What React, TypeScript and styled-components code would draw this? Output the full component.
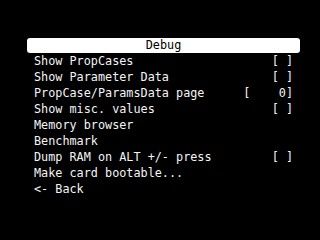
import React from "react";
import styled, { createGlobalStyle } from "styled-components";

const Global = createGlobalStyle`
  html, body {
    margin: 0;
    padding: 0;
    background: #000;
    width: 320px;
    height: 240px;
    overflow: hidden;
  }
`;

const Screen = styled.div`
  width: 320px;
  height: 240px;
  background: #000;
  padding: 37px 20px 0 27px;
  box-sizing: border-box;
  font-family: "DejaVu Sans Mono", "Liberation Mono", monospace;
  font-size: 11.8px;
  line-height: 16px;
  color: #f4f4f4;
`;

const Menu = styled.div`
  display: flex;
  flex-direction: column;
  width: 273px;
`;

const TitleBar = styled.div`
  height: 15px;
  margin: 1px 0 0;
  background: #fff;
  border-radius: 3px;
  color: #000;
  display: flex;
  align-items: center;
  justify-content: center;
  line-height: 15px;
`;

const Row = styled.div`
  height: 16px;
  display: flex;
  justify-content: space-between;
  padding: 0 7px 0 7px;
  white-space: pre;
`;

const Value = styled.span`
  white-space: pre;
`;

const items: { label: string; value?: string }[] = [
  { label: "Show PropCases", value: "[ ]" },
  { label: "Show Parameter Data", value: "[ ]" },
  { label: "PropCase/ParamsData page", value: "[    0]" },
  { label: "Show misc. values", value: "[ ]" },
  { label: "Memory browser" },
  { label: "Benchmark" },
  { label: "Dump RAM on ALT +/- press", value: "[ ]" },
  { label: "Make card bootable..." },
  { label: "<- Back" },
];

export default function App() {
  return (
    <>
      <Global />
      <Screen>
        <Menu>
          <TitleBar>Debug</TitleBar>
          {items.map((it) => (
            <Row key={it.label}>
              <span>{it.label}</span>
              {it.value && <Value>{it.value}</Value>}
            </Row>
          ))}
        </Menu>
      </Screen>
    </>
  );
}
